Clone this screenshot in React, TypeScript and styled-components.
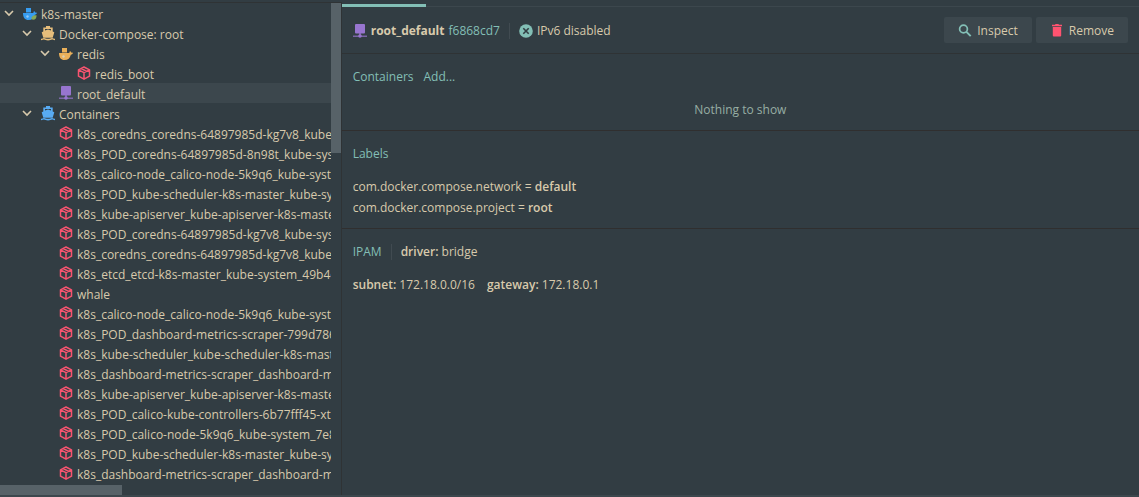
import React from 'react';
import styled, { createGlobalStyle } from 'styled-components';

const Global = createGlobalStyle`
  *, *::before, *::after { box-sizing: border-box; }
  html, body, #root { height: 100%; }
  body {
    margin: 0;
    background: #323d43;
    color: #d8caac;
    font: 12px/20px "Open Sans", sans-serif;
    overflow: hidden;
  }
`;

const colors = {
  text: '#d8caac',
  teal: '#83bfb6',
  line: '#2f3335',
  raised: '#3c474d',
  thumb: '#576268',
  red: '#f85470',
  purple: '#9775cf',
};

const Window = styled.div`
  display: flex;
  height: 100%;
  border-bottom: 2px solid ${colors.raised};
`;

const Sidebar = styled.aside`
  flex: 0 0 30%;
  display: grid;
  grid-template-columns: minmax(0, 1fr) 10px;
  grid-template-rows: minmax(0, 1fr) 10px;
  margin-top: 2px;
  border-top: 1px solid ${colors.line};
  border-right: 1px solid ${colors.line};
`;

const Tree = styled.ul`
  list-style: none;
  margin: 0;
  padding: 0;
  overflow: hidden;
`;

const Row = styled.li<{ $depth: number; $selected?: boolean }>`
  display: flex;
  align-items: center;
  height: 20px;
  padding-left: ${(p) => 3 + p.$depth * 18}px;
  background: ${(p) => (p.$selected ? colors.raised : 'transparent')};
  white-space: nowrap;
`;

const Toggle = styled.button`
  display: flex;
  flex: none;
  width: 20px;
  padding: 0;
  border: 0;
  background: none;
  color: ${colors.text};
`;

const Gap = styled.span`
  flex: none;
  width: 20px;
`;

const Icon = styled.svg`
  display: block;
  flex: none;
`;

const RowLabel = styled.span`
  padding: 4px 0 0 4px;
`;

const VerticalBar = styled.div`
  grid-column: 2;
  grid-row: 1 / 3;
`;

const VerticalThumb = styled.div`
  height: 150px;
  background: ${colors.thumb};
`;

const HorizontalBar = styled.div`
  grid-row: 2;
`;

const HorizontalThumb = styled.div`
  width: 37%;
  height: 10px;
  background: ${colors.thumb};
`;

const Details = styled.main`
  flex: 1;
  min-width: 0;
  display: flex;
  flex-direction: column;
`;

const TabStrip = styled.div`
  height: 7px;
  padding-top: 4px;
  border-bottom: 1px solid ${colors.raised};
`;

const ActiveTab = styled.div`
  width: 84px;
  height: 3px;
  background: ${colors.teal};
`;

const Header = styled.header`
  display: flex;
  align-items: center;
  height: 47px;
  padding: 0 11px;
  border-bottom: 1px solid ${colors.line};
`;

const Summary = styled.div`
  display: flex;
  align-items: center;
  padding-top: 2px;
`;

const Title = styled.h1`
  margin: 0 4px 0 4px;
  font-size: 12px;
  font-weight: 700;
`;

const Accent = styled.span`
  color: ${colors.teal};
`;

const Divider = styled.span`
  width: 1px;
  height: 16px;
  margin: 0 9px;
  background: #414b51;
`;

const Status = styled.span`
  display: flex;
  align-items: center;
  gap: 4px;
`;

const Actions = styled.div`
  display: flex;
  gap: 4px;
  margin-left: auto;
`;

const Action = styled.button`
  display: flex;
  align-items: center;
  gap: 5px;
  height: 26px;
  padding: 1px 14px 0;
  border: 0;
  border-radius: 2px;
  background: ${colors.raised};
  color: ${colors.text};
  font: inherit;
`;

const Section = styled.section`
  padding: 13px 11px 10px;

  & + & {
    border-top: 1px solid #302f2f;
  }
`;

const SectionHead = styled.div`
  display: flex;
  align-items: center;
`;

const SectionTitle = styled.h2`
  margin: 0;
  color: ${colors.teal};
  font-size: 12px;
  font-weight: 400;
`;

const AddLink = styled.a`
  margin-left: 10px;
  color: ${colors.teal};
  text-decoration: none;
`;

const Empty = styled.p`
  margin: 12px 0 0;
  line-height: 21px;
  color: #97aea3;
  text-align: center;
`;

const Lines = styled.div`
  margin-top: 12px;
  line-height: 21px;
`;

const Pair = styled.span`
  margin-right: 12px;
`;

const Strong = styled.b`
  font-weight: 600;
`;

type Kind = 'host' | 'compose' | 'service' | 'box' | 'network' | 'ship';

const Whale = ({ color, dot }: { color: string; dot?: boolean }) => (
  <Icon width="14" height="14" viewBox="0 0 14 14" fill={color} aria-hidden="true">
    <path d="M3 2h5v4.500H3z" />
    <path d="M0 7h10.300c.1-1 .4-1.700.9-2l1 1.500 1.800.3c-.3 1.200-1 1.700-2.200 1.900C11 12 9 14 5.500 14 2 14 0 11.500 0 7z" />
    <circle cx="4.500" cy="10.500" r="1.200" fill="#cfe6f5" opacity=".6" />
    {dot && <path d="M8.500 11.500c1-2 3-2.500 5-2.200.3 2.500-1 4.500-3.500 4.500-1 0-1.700-1-1.500-2.300z" fill="#86a85a" />}
  </Icon>
);

const Ship = ({ color }: { color: string }) => (
  <Icon width="14" height="16" viewBox="0 0 14 16" fill={color} aria-hidden="true">
    <path d="M5 1h4v1.500h2.700v4l1.600.8-1.600 5.400H2.300L.7 7.300l1.600-.8v-4H5zM4 4v1.600l3-1 3 1V4z" fillRule="evenodd" />
    <path d="M0 13.700c1.500 0 1.500-.8 3-.8s2 .8 4 .8 2.500-.8 4-.8 1.500.8 3 .8v1.600c-1.500 0-2-.7-3-.7s-2 .8-4 .8-3-.8-4-.8-1.500.7-3 .7z" />
  </Icon>
);

const Box = () => (
  <Icon width="14" height="14" viewBox="0 0 14 14" fill="none" stroke={colors.red} strokeWidth="1.500" strokeLinejoin="round" aria-hidden="true">
    <path d="M7 1l5.500 2.800v6.400L7 13.200l-5.500-3V3.800zM1.500 3.900L7 6.700l5.500-2.800M7 6.700V13M4.200 2.500l5.400 2.800" />
  </Icon>
);

const Network = () => (
  <Icon width="14" height="14" viewBox="0 0 14 14" fill={colors.purple} aria-hidden="true">
    <rect x="2" y="0" width="10" height="9.500" rx="1" />
    <path d="M6.300 9h1.400v2H6.300z" />
    <path d="M0 11.500h14V13H0z" opacity=".7" />
    <circle cx="7" cy="12" r="1.800" />
  </Icon>
);

const Chevron = () => (
  <Icon width="12" height="12" viewBox="0 0 12 12" fill="none" stroke="currentColor" strokeWidth="1.600" aria-hidden="true">
    <path d="M2 4l4 4 4-4" />
  </Icon>
);

const Glyph = ({ kind }: { kind: Kind }) => {
  switch (kind) {
    case 'host':
      return <Whale color="#379df1" dot />;
    case 'compose':
      return <Ship color="#e6bd7b" />;
    case 'service':
      return <Whale color="#e9b05a" />;
    case 'ship':
      return <Ship color="#58abf3" />;
    case 'network':
      return <Network />;
    default:
      return <Box />;
  }
};

interface Item {
  label: string;
  depth: number;
  kind: Kind;
  open?: boolean;
  selected?: boolean;
}

const containers = [
  'k8s_coredns_coredns-64897985d-kg7v8_kube-system',
  'k8s_POD_coredns-64897985d-8n98t_kube-system',
  'k8s_calico-node_calico-node-5k9q6_kube-system',
  'k8s_POD_kube-scheduler-k8s-master_kube-system',
  'k8s_kube-apiserver_kube-apiserver-k8s-master_kube',
  'k8s_POD_coredns-64897985d-kg7v8_kube-system',
  'k8s_coredns_coredns-64897985d-kg7v8_kube-system',
  'k8s_etcd_etcd-k8s-master_kube-system_49b4ef',
  'whale',
  'k8s_calico-node_calico-node-5k9q6_kube-system',
  'k8s_POD_dashboard-metrics-scraper-799d786dbf',
  'k8s_kube-scheduler_kube-scheduler-k8s-master',
  'k8s_dashboard-metrics-scraper_dashboard-metrics',
  'k8s_kube-apiserver_kube-apiserver-k8s-master_kube',
  'k8s_POD_calico-kube-controllers-6b77fff45-xtc',
  'k8s_POD_calico-node-5k9q6_kube-system_7e8a',
  'k8s_POD_kube-scheduler-k8s-master_kube-system',
  'k8s_dashboard-metrics-scraper_dashboard-metrics',
];

const items: Item[] = [
  { label: 'k8s-master', depth: 0, kind: 'host', open: true },
  { label: 'Docker-compose: root', depth: 1, kind: 'compose', open: true },
  { label: 'redis', depth: 2, kind: 'service', open: true },
  { label: 'redis_boot', depth: 3, kind: 'box' },
  { label: 'root_default', depth: 2, kind: 'network', selected: true },
  { label: 'Containers', depth: 1, kind: 'ship', open: true },
  ...containers.map((label): Item => ({ label, depth: 2, kind: 'box' })),
];

export default function App() {
  return (
    <>
      <Global />
      <Window>
        <Sidebar>
          <Tree>
            {items.map((item, i) => (
              <Row key={i} $depth={item.depth} $selected={item.selected}>
                {item.open ? (
                  <Toggle aria-label={`Collapse ${item.label}`}>
                    <Chevron />
                  </Toggle>
                ) : (
                  <Gap />
                )}
                <Glyph kind={item.kind} />
                <RowLabel>{item.label}</RowLabel>
              </Row>
            ))}
          </Tree>
          <VerticalBar>
            <VerticalThumb />
          </VerticalBar>
          <HorizontalBar>
            <HorizontalThumb />
          </HorizontalBar>
        </Sidebar>
        <Details>
          <TabStrip>
            <ActiveTab />
          </TabStrip>
          <Header>
            <Summary>
              <Network />
              <Title>root_default</Title>
              <Accent>f6868cd7</Accent>
              <Divider />
              <Status>
                <Icon width="14" height="14" viewBox="0 0 14 14" aria-hidden="true">
                  <circle cx="7" cy="7" r="6.800" fill={colors.teal} />
                  <path d="M4.300 4.300l5.400 5.400M9.700 4.300L4.300 9.700" stroke="#323d43" strokeWidth="1.600" />
                </Icon>
                IPv6 disabled
              </Status>
            </Summary>
            <Actions>
              <Action>
                <Icon width="14" height="14" viewBox="0 0 14 14" fill="none" stroke={colors.teal} aria-hidden="true">
                  <circle cx="5.500" cy="5" r="3.900" strokeWidth="1.700" />
                  <path d="M8.200 7.700l4.500 4.500" strokeWidth="1.900" />
                </Icon>
                Inspect
              </Action>
              <Action>
                <Icon width="14" height="14" viewBox="0 0 14 14" fill="#ff5370" aria-hidden="true">
                  <path d="M2 .8h3L5.600 0h2.800L9 .8h3v1.400H2zM2.800 3h8.400v8.500a1 1 0 0 1-1 1H3.800a1 1 0 0 1-1-1z" />
                </Icon>
                Remove
              </Action>
            </Actions>
          </Header>
          <Section>
            <SectionHead>
              <SectionTitle>Containers</SectionTitle>
              <AddLink href="#add">Add...</AddLink>
            </SectionHead>
            <Empty>Nothing to show</Empty>
          </Section>
          <Section>
            <SectionTitle>Labels</SectionTitle>
            <Lines>
              <div>com.docker.compose.network = <Strong>default</Strong></div>
              <div>com.docker.compose.project = <Strong>root</Strong></div>
            </Lines>
          </Section>
          <Section>
            <SectionHead>
              <SectionTitle>IPAM</SectionTitle>
              <Divider />
              <span><Strong>driver:</Strong> bridge</span>
            </SectionHead>
            <Lines>
              <Pair><Strong>subnet:</Strong> 172.18.0.0/16</Pair>
              <Pair><Strong>gateway:</Strong> 172.18.0.1</Pair>
            </Lines>
          </Section>
        </Details>
      </Window>
    </>
  );
}
